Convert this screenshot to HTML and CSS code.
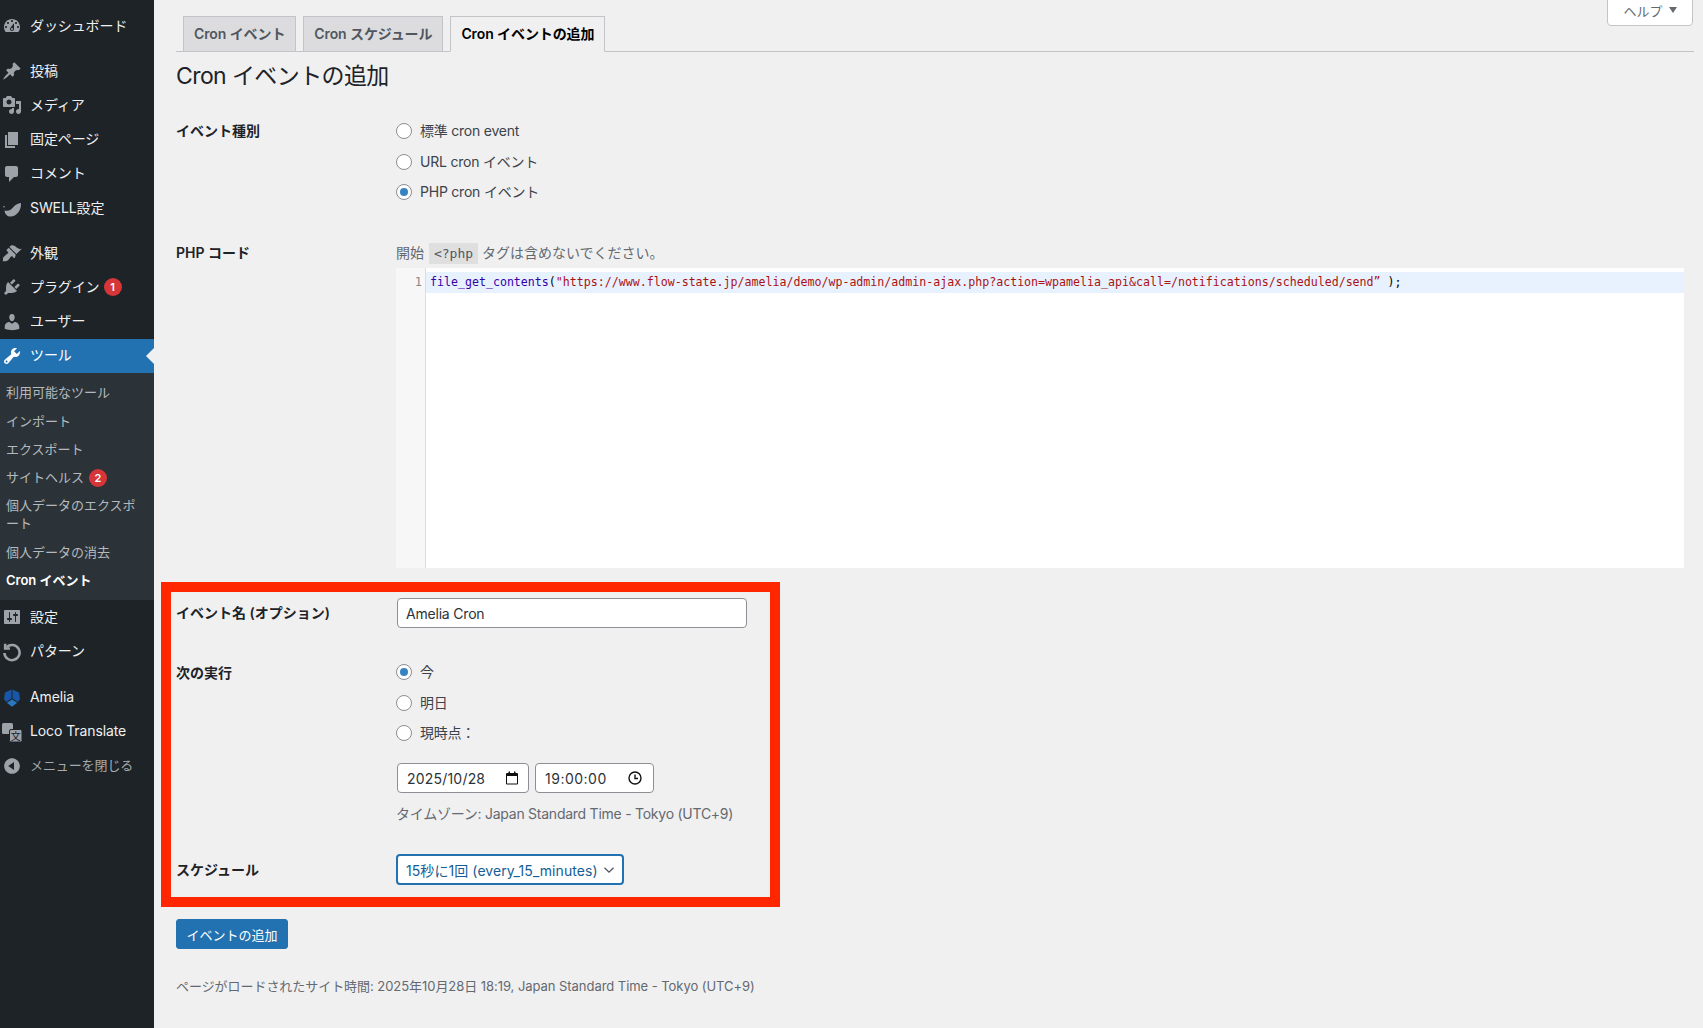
FILE: index.html
```html
<!DOCTYPE html>
<html lang="ja">
<head>
<meta charset="utf-8">
<title>Cron イベントの追加</title>
<link rel="stylesheet" href="styles.css">
</head>
<body>
<div class="page">
  <nav class="sidebar">
    <a class="mi"><svg class="ic" viewBox="0 0 20 20"><path d="M3.76 16h12.48c1.1-1.37 1.76-3.11 1.76-5 0-4.42-3.58-8-8-8s-8 3.58-8 8c0 1.89.66 3.63 1.76 5zM10 4c.55 0 1 .45 1 1s-.45 1-1 1-1-.45-1-1 .45-1 1-1zM6 6c.55 0 1 .45 1 1s-.45 1-1 1-1-.45-1-1 .45-1 1-1zm8 0c.55 0 1 .45 1 1s-.45 1-1 1-1-.45-1-1 .45-1 1-1zm-5.37 5.55L12 7v6c0 1.1-.9 2-2 2s-2-.9-2-2c0-.57.24-1.08.63-1.45zM4 10c.55 0 1 .45 1 1s-.45 1-1 1-1-.45-1-1 .45-1 1-1zm12 0c.55 0 1 .45 1 1s-.45 1-1 1-1-.45-1-1 .45-1 1-1zm-5 3c0-.55-.45-1-1-1s-1 .45-1 1 .45 1 1 1 1-.45 1-1z"/></svg><span>ダッシュボード</span></a>
    <a class="mi sep"><svg class="ic" viewBox="0 0 20 20"><path d="M10.44 3.02l1.82-1.82 6.36 6.35-1.83 1.82c-1.05-.68-2.48-.57-3.41.36l-.75.75c-.92.93-1.04 2.35-.35 3.41l-1.83 1.82-2.41-2.41-2.8 2.79c-.42.42-3.38 2.71-3.8 2.29s1.86-3.39 2.28-3.81l2.79-2.79L4.1 9.36l1.83-1.82c1.05.69 2.48.57 3.4-.36l.75-.75c.93-.92 1.05-2.35.36-3.41z"/></svg><span>投稿</span></a>
    <a class="mi"><svg class="ic" viewBox="0 0 20 20"><path d="M13 11V4c0-.55-.45-1-1-1h-1.67L9 1H5L3.67 3H2c-.55 0-1 .45-1 1v7c0 .55.45 1 1 1h10c.55 0 1-.45 1-1zM7 4.5c1.38 0 2.5 1.12 2.5 2.5S8.38 9.5 7 9.5 4.5 8.38 4.5 7 5.62 4.5 7 4.5zM14 6h5v10.5c0 1.38-1.12 2.5-2.5 2.5S14 17.88 14 16.5s1.12-2.5 2.5-2.5c.17 0 .34.02.5.05V9h-3V6zm-4 8.05V13h2v3.5c0 1.38-1.12 2.5-2.5 2.5S7 17.88 7 16.5 8.12 14 9.5 14c.17 0 .34.02.5.05z"/></svg><span>メディア</span></a>
    <a class="mi"><svg class="ic" viewBox="0 0 20 20"><path d="M6 15V2h10v13H6zm-1 1h8v2H3V5h2v11z"/></svg><span>固定ページ</span></a>
    <a class="mi"><svg class="ic" viewBox="0 0 20 20"><path d="M5 2h9c1.1 0 2 .9 2 2v7c0 1.1-.9 2-2 2h-2l-5 5v-5H5c-1.1 0-2-.9-2-2V4c0-1.1.9-2 2-2z"/></svg><span>コメント</span></a>
    <a class="mi"><svg class="ic" viewBox="0 0 20 20"><path d="M19 5C19.500 11 15.500 18.500 8.500 18.500 5.500 18.500 3 16.500 2.500 12.500 6 13.500 9 12 11 9.500 13 7 15.500 5.500 19 5z"/><circle cx="2" cy="8.800" r=".8"/></svg><span>SWELL設定</span></a>
    <a class="mi sep"><svg class="ic" viewBox="0 0 20 20"><path d="M14.48 11.06L7.41 3.99l1.5-1.5c.5-.56 2.3-.47 3.51.32 1.21.8 1.43 1.28 2.91 2.1 1.18.64 2.45 1.26 4.45.85zm-.71.71L6.7 4.7 4.93 6.47c-.39.39-.39 1.02 0 1.41l1.06 1.06c.39.39.39 1.03 0 1.42-.6.6-1.43 1.11-2.21 1.69-.35.26-.7.53-1.01.84C1.43 13.71.96 14.87 1 15.930l-.2 2.400 2.800-.1c1-.1 2.300-.700 2.900-1.400.3-.3.6-.7.85-1 .58-.78 1.09-1.61 1.69-2.21.39-.39 1.03-.39 1.42 0l1.06 1.06c.39.39 1.02.39 1.41 0z"/></svg><span>外観</span></a>
    <a class="mi"><svg class="ic" viewBox="0 0 20 20"><path d="M13.11 4.36L9.87 7.6 8 5.73l3.24-3.24c.35-.34 1.05-.2 1.56.32.52.51.66 1.21.31 1.55zm-8 1.77l.91-1.12 9.01 9.01-1.19.84c-.71.71-2.63 1.16-3.82 1.16H6.14L4.9 17.26c-.59.59-1.54.59-2.12 0-.59-.58-.59-1.53 0-2.12l1.24-1.24v-3.88c0-1.13.4-3.19 1.09-3.89zm7.26 3.97l3.24-3.24c.34-.35 1.04-.21 1.55.31.52.51.66 1.21.31 1.55l-3.24 3.25z"/></svg><span>プラグイン</span><b class="badge">1</b></a>
    <a class="mi"><svg class="ic" viewBox="0 0 20 20"><path d="M10 9.25c-2.27 0-2.73-3.44-2.73-3.44C7 4.02 7.82 2 9.97 2c2.16 0 2.98 2.02 2.71 3.81 0 0-.41 3.44-2.68 3.44zm0 2.57L12.72 10c2.39 0 4.52 2.33 4.52 4.53v2.49s-3.65 1.13-7.24 1.13c-3.65 0-7.24-1.13-7.24-1.13v-2.49c0-2.25 1.94-4.48 4.47-4.48z"/></svg><span>ユーザー</span></a>
    <a class="mi active"><svg class="ic" viewBox="0 0 20 20"><path d="M16.68 9.77c-1.34 1.34-3.3 1.67-4.95.99l-5.41 6.52c-.99.99-2.59.99-3.58 0s-.99-2.59 0-3.57l6.52-5.42c-.68-1.65-.35-3.61.99-4.95 1.28-1.28 3.12-1.62 4.72-1.06l-2.89 2.89 2.82 2.82 2.86-2.87c.53 1.58.18 3.39-1.08 4.67zM3.81 16.21c.4.39 1.04.39 1.43 0 .4-.4.4-1.04 0-1.43-.39-.4-1.03-.4-1.43 0-.39.39-.39 1.03 0 1.43z"/></svg><span>ツール</span></a>
    <div class="submenu">
      <a class="si">利用可能なツール</a>
      <a class="si">インポート</a>
      <a class="si">エクスポート</a>
      <a class="si">サイトヘルス<b class="badge">2</b></a>
      <a class="si">個人データのエクスポ<br>ート</a>
      <a class="si">個人データの消去</a>
      <a class="si current">Cron イベント</a>
    </div>
    <a class="mi mi-settings"><svg class="ic" viewBox="0 0 20 20"><path d="M18 16V4c0-.55-.45-1-1-1H3c-.55 0-1 .45-1 1v12c0 .55.45 1 1 1h14c.55 0 1-.45 1-1zM8 11h1c.55 0 1 .45 1 1s-.45 1-1 1H8v1.5c0 .28-.22.5-.5.5s-.5-.22-.5-.5V13H6c-.55 0-1-.45-1-1s.45-1 1-1h1V5.500c0-.28.22-.5.5-.5s.5.22.5.5V11zm5-2h-1c-.55 0-1-.45-1-1s.45-1 1-1h1V5.500c0-.28.22-.5.5-.5s.5.22.5.5V7h1c.55 0 1 .45 1 1s-.45 1-1 1h-1v5.500c0 .28-.22.5-.5.5s-.5-.22-.5-.5V9z"/></svg><span>設定</span></a>
    <a class="mi"><svg class="ic" viewBox="0 0 20 20"><path class="ring" d="M4.800 5A7.600 7.600 0 1 1 2.400 11"/><path class="ring" d="M3.200 1.800V6.500H7.900"/></svg><span>パターン</span></a>
    <a class="mi sep sep-wide"><svg class="ic" viewBox="0 0 20 20"><path class="am-d" d="M9.500 1.500 3 4.500 2 11 4 14 9.500 10.500z"/><path class="am-d" d="M10.500 1.500 17 4.500 18 11 16 14 10.500 10.500z"/><path class="am-l" d="M10 11.500 4.800 14.800 10 18.800 15.200 14.800z"/></svg><span>Amelia</span></a>
    <a class="mi"><svg class="ic loco" viewBox="0 0 20 20"><rect y="1" width="11" height="11" rx="1.500"/><rect class="loco-b" x="7.500" y="7.500" width="12.500" height="12.500" rx="1.500"/><text x="13.700" y="17.500" class="loco-t">文</text></svg><span>Loco Translate</span></a>
    <a class="mi collapse"><svg class="ic" viewBox="0 0 20 20"><path d="M10 2.160c4.330 0 7.840 3.510 7.840 7.840s-3.510 7.840-7.840 7.840S2.160 14.330 2.160 10 5.710 2.160 10 2.160zm2 11.720V6.120L6.180 9.970z"/></svg><span>メニューを閉じる</span></a>
  </nav>

  <main class="main">
    <div class="help-tab">ヘルプ <i class="help-caret"></i></div>
    <div class="tabs">
      <a class="tab">Cron イベント</a>
      <a class="tab">Cron スケジュール</a>
      <a class="tab tab-active">Cron イベントの追加</a>
    </div>
    <h1 class="title">Cron イベントの追加</h1>

    <form class="form">
      <div class="row row-type">
        <div class="lab">イベント種別</div>
        <div>
          <label class="radio"><input type="radio" name="t">標準 cron event</label>
          <label class="radio"><input type="radio" name="t">URL cron イベント</label>
          <label class="radio"><input type="radio" name="t" checked>PHP cron イベント</label>
        </div>
      </div>

      <div class="row row-code">
        <div class="lab lab-code">PHP コード</div>
        <div>
          <p class="desc">開始 <code class="tag">&lt;?php</code> タグは含めないでください。</p>
          <div class="editor">
            <div class="gutter">1</div>
            <div class="lines"><div class="line"><span class="c-fn">file_get_contents</span>(<span class="c-str">"https://www.flow-state.jp/amelia/demo/wp-admin/admin-ajax.php?action=wpamelia_api&amp;call=/notifications/scheduled/send”</span> );</div></div>
          </div>
        </div>
      </div>

      <div class="row row-name">
        <div class="lab lab-name">イベント名 (オプション)</div>
        <div><input class="text" type="text" value="Amelia Cron"></div>
      </div>

      <div class="row row-next">
        <div class="lab lab-next">次の実行</div>
        <div>
          <label class="radio"><input type="radio" name="n" checked>今</label>
          <label class="radio"><input type="radio" name="n">明日</label>
          <label class="radio"><input type="radio" name="n">現時点：</label>
          <div class="when">
            <div class="field field-date"><span>2025/10/28</span>
              <svg class="fi" viewBox="0 0 14 14"><path d="M2 2h10a1 1 0 0 1 1 1v9.500a1 1 0 0 1-1 1H2a1 1 0 0 1-1-1V3a1 1 0 0 1 1-1zm0 3v7.500h10V5zM3.500.5h1.500V2H3.500zM9 .5h1.500V2H9z"/></svg></div>
            <div class="field field-time"><span>19:00:00</span>
              <svg class="fi" viewBox="0 0 14 14"><path class="clock" d="M7 1a6 6 0 1 0 0 12A6 6 0 0 0 7 1zM7 3.500V7.500H10"/></svg></div>
          </div>
          <p class="tz">タイムゾーン: Japan Standard Time - Tokyo (UTC+9)</p>
        </div>
      </div>

      <div class="row row-sched">
        <div class="lab">スケジュール</div>
        <div class="select"><span>15秒に1回 (every_15_minutes)</span>
          <svg class="chev" viewBox="0 0 12 8"><path d="M1.500 1.800 6 6.200l4.500-4.400"/></svg></div>
      </div>

      <button class="submit" type="button">イベントの追加</button>
    </form>

    <p class="foot">ページがロードされたサイト時間: 2025年10月28日 18:19, Japan Standard Time - Tokyo (UTC+9)</p>
    <div class="highlight"></div>
  </main>
</div>
</body>
</html>
```
FILE: styles.css
```css
* { box-sizing: border-box; }
html, body { margin: 0; height: 100%; overflow: hidden; }
body {
  background: #f0f0f1;
  color: #3c434a;
  font-family: Inter, "Noto Sans CJK JP", sans-serif;
  font-size: 13px;
}
.page { display: flex; height: 1028px; }

/* sidebar */
.sidebar { width: 154px; flex: none; background: #1d2327; padding-top: 9px; color: #f0f0f1; font-size: 14px; }
.mi { display: flex; align-items: center; height: 34.2px; padding-left: 2px; gap: 8px; position: relative; white-space: nowrap; letter-spacing: -.1px; }
.mi > span { margin-bottom: 3px; }
.mi.sep { margin-top: 11px; }
.mi.sep-wide { margin-top: 12px; }
.mi-settings { height: 35.2px; }
.ic { width: 20px; height: 20px; flex: none; fill: #9ca2a7; }
.ring { fill: none; stroke: #9ca2a7; stroke-width: 2.6; }
.am-d { fill: #1a56a8; }
.am-l { fill: #2a79c0; }
.loco { overflow: visible; }
.loco-b { fill: #9ca2a7; stroke: #1d2327; stroke-width: 1; }
.loco-t { font-size: 10px; fill: #1d2327; text-anchor: middle; font-family: "Noto Sans CJK JP", sans-serif; }
.mi.active { background: #2271b1; color: #fff; }
.mi.active .ic { fill: #fff; }
.mi.active::after {
  content: ""; position: absolute; right: 0; top: 50%; margin-top: -8px;
  border: 8px solid transparent; border-right-color: #f0f0f1; border-left-width: 0;
}
.mi.collapse { color: #a7aaad; font-size: 13px; }
.badge {
  display: inline-flex; align-items: center; justify-content: center;
  width: 18px; height: 18px; border-radius: 50%; background: #d63638; color: #fff;
  font-size: 11px; font-weight: 600; line-height: 1;
}
.mi .badge { margin-left: -4px; }
.submenu { background: #2c3338; padding: 5.5px 0; font-size: 13px; color: #b4b9be; }
.si { display: block; padding: 5px 0 5px 6px; line-height: 18.2px; }
.si .badge { margin: -4px 0 -4px 5px; vertical-align: middle; }
.si.current { color: #fff; font-weight: 600; }

/* main */
.main { flex: 1; position: relative; padding: 16px 9px 0 22px; }
.help-tab {
  position: absolute; top: -1px; right: 10px; width: 86px; height: 27px; padding-bottom: 5px;
  display: flex; align-items: center; justify-content: center; gap: 6px;
  background: #fff; border: 1px solid #c3c4c7; border-radius: 0 0 4px 4px; color: #646970;
}
.help-caret { width: 0; height: 0; border: 4.5px solid transparent; border-top: 6px solid #646970; border-bottom: 0; }
.tabs { display: flex; gap: 7px; padding-left: 7px; height: 36px; border-bottom: 1px solid #c3c4c7; }
.tab {
  height: 36px; padding: 0 10px 2px; display: flex; align-items: center; letter-spacing: -.1px;
  background: #dcdcde; border: 1px solid #c3c4c7; color: #50575e; font-size: 14px; font-weight: 600; white-space: nowrap;
}
.tab-active { background: #f0f0f1; border-bottom-color: #f0f0f1; color: #000; }
.title { margin: 10px 0 0; font-size: 23px; font-weight: 400; line-height: 29px; color: #1d2327; letter-spacing: -.6px; }

/* form */
.form { padding-right: 10px; }
.row { display: grid; grid-template-columns: 220px 1fr; }
.lab { font-size: 14px; font-weight: 600; color: #1d2327; line-height: 20px; }
.row-type { margin-top: 25px; }
.row-type > .lab { padding-top: 4.5px; }
.radio { display: flex; align-items: center; height: 30.5px; padding-bottom: 2px; font-size: 14px; color: #3c434a; letter-spacing: -.22px; }
.radio input {
  appearance: none; width: 16px; height: 16px; margin: 2px 8px 0 0; flex: none;
  background: #fff; border: 1px solid #8c8f94; border-radius: 50%; display: grid; place-items: center;
}
.radio input:checked::before { content: ""; width: 8px; height: 8px; border-radius: 50%; background: #3582c4; }
.row-code { margin-top: 35.5px; }
.desc { margin: 0 0 5px; height: 20px; line-height: 20px; font-size: 14px; color: #646970; }
.tag { margin-left: 1px; background: rgba(0,0,0,.07); padding: 3px 5px; font-family: "DejaVu Sans Mono", monospace; font-size: 13px; color: #50575e; }
.editor { display: flex; height: 300px; background: #fff; }
.gutter {
  width: 30px; flex: none; background: #f7f7f7; border-right: 1px solid #ddd; color: #888;
  padding: 4px 3px 0 0; text-align: right; font: 12px/21px "DejaVu Sans Mono", monospace;
}
.lines { flex: 1; padding-top: 4px; }
.line { height: 21px; padding-left: 4px; background: #e8f2ff; color: #000; font: 11.62px/21px "DejaVu Sans Mono", monospace; white-space: pre; }
.c-fn { color: #30a; }
.c-str { color: #a11; }
.row-name { margin-top: 30px; }
.lab-name { padding-top: 5px; }
.text {
  display: block; width: 350px; height: 30px; margin-left: 1px; padding: 0 8px; background: #fff; letter-spacing: -.2px;
  border: 1px solid #8c8f94; border-radius: 4px; color: #2c3338; font: 14px Inter, "Noto Sans CJK JP", sans-serif;
}
.row-next { margin-top: 29px; }
.lab-next { padding-top: 6px; }
.when { display: flex; gap: 6px; margin: 14.5px 0 0 1px; }
.field {
  display: flex; align-items: center; justify-content: space-between; height: 30px; padding: 0 9px;
  background: #fff; border: 1px solid #8c8f94; border-radius: 4px; color: #2c3338; font-size: 14px;
}
.field-date { width: 132px; letter-spacing: .2px; }
.field-time { width: 119px; padding-right: 11px; letter-spacing: .5px; }
.fi { width: 14px; height: 14px; fill: #111; fill-rule: evenodd; }
.clock { fill: none; stroke: #111; stroke-width: 1.4; }
.tz { margin: 11px 0 0; line-height: 20px; font-size: 14px; color: #646970; letter-spacing: -.25px; }
.row-sched { margin-top: 30px; align-items: center; }
.select {
  display: flex; align-items: center; justify-content: space-between; width: 228px; height: 31px; padding: 0 7px 0 8px; letter-spacing: .06px;
  background: #fff; border: 2px solid #2271b1; border-radius: 4px; color: #135e96; font-size: 14px; white-space: nowrap;
}
.chev { width: 12px; height: 8px; fill: none; stroke: #50575e; stroke-width: 1.3; }
.submit {
  display: block; width: 112px; height: 30px; margin-top: 34px; padding: 0; background: #2271b1; border: 1px solid #2271b1;
  border-radius: 3px; color: #fff; font: 13px Inter, "Noto Sans CJK JP", sans-serif;
}
.foot { margin: 27px 0 0; line-height: 20px; color: #646970; letter-spacing: -.05px; }
.highlight { position: absolute; left: 7px; top: 582px; width: 619px; height: 325px; border: 10px solid #ff2600; pointer-events: none; }
```
